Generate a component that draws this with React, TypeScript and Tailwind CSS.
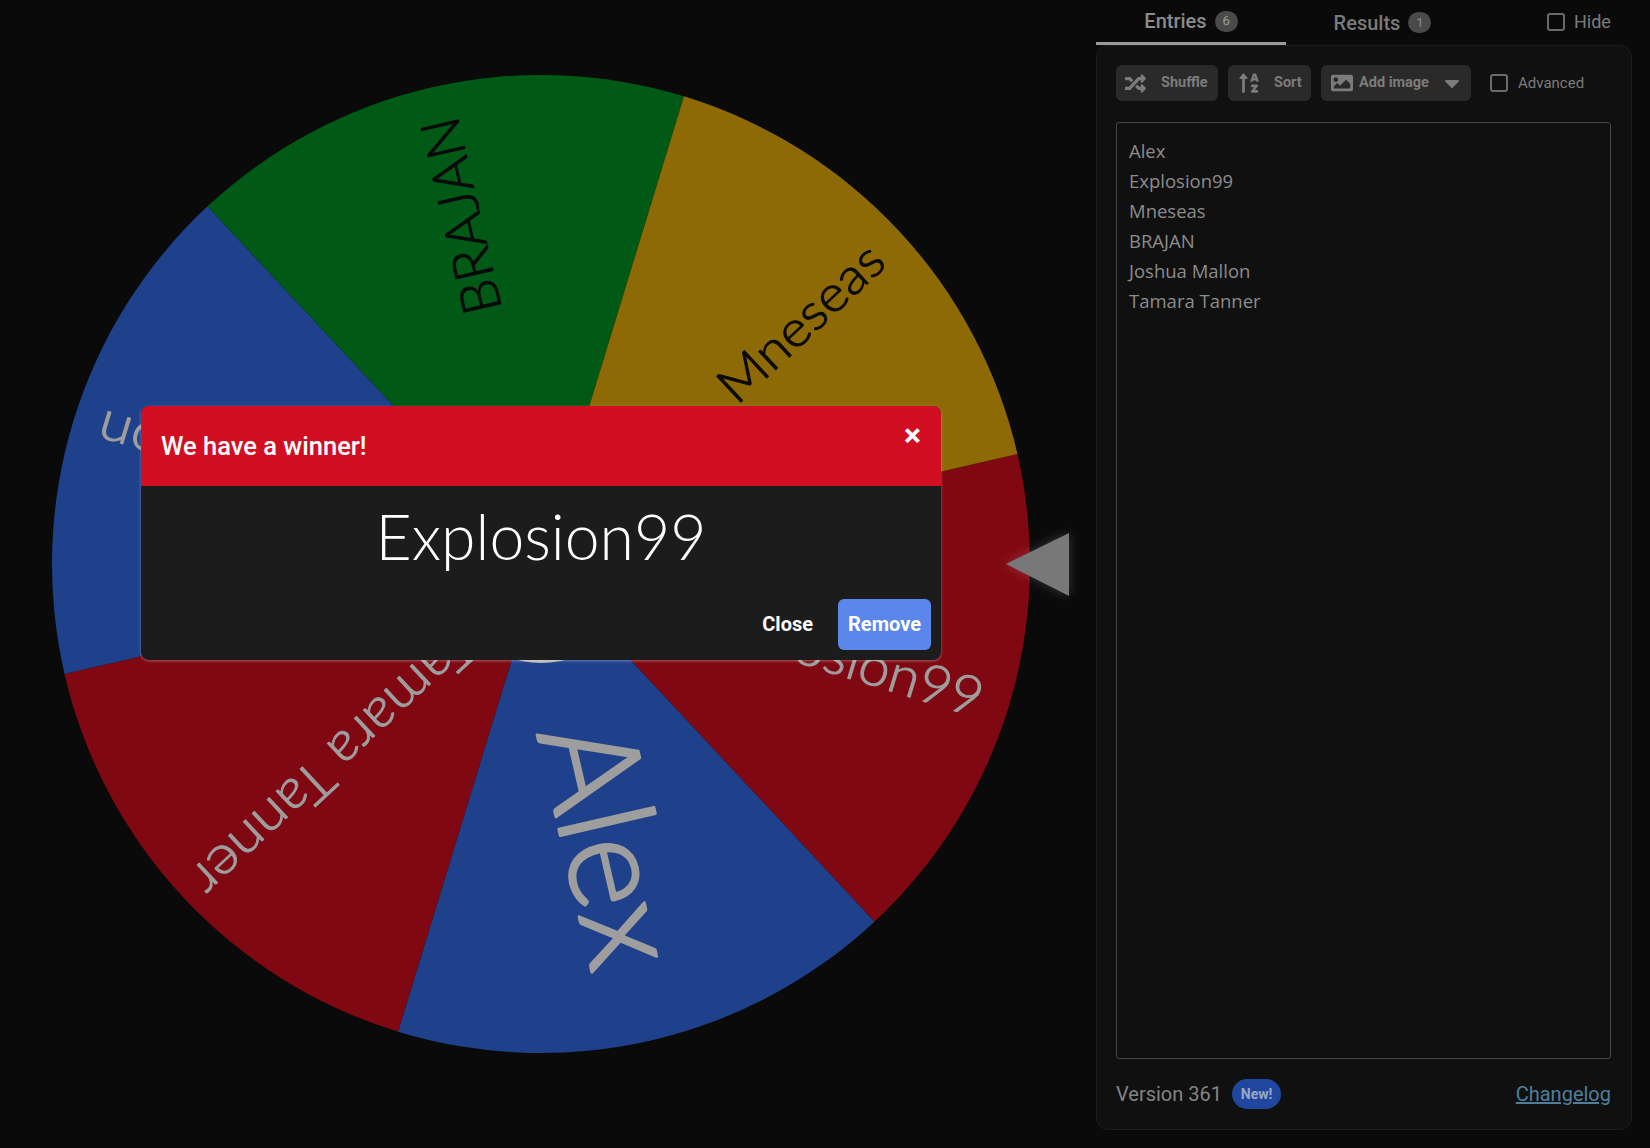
import type { ReactNode } from "react";
import { FaCaretDown, FaImage, FaRandom, FaSortAlphaUp } from "react-icons/fa";

type Slice = {
  name: string;
  from: number;
  color: string;
  text: string;
  size: number;
  end: number;
  length: number;
  stroke: number;
  lift: number;
};

const CX = 541;
const CY = 564;
const R = 489;

const slices: Slice[] = [
  { name: "Explosion99", from: -13, color: "#800812", text: "#9e9e9e", size: 54, end: 461, length: 296, stroke: 1, lift: 0 },
  { name: "Alex", from: 47, color: "#1f408b", text: "#9e9e9e", size: 134, end: 412, length: 248, stroke: 3, lift: 6 },
  { name: "Tamara Tanner", from: 107, color: "#800812", text: "#9e9e9e", size: 54, end: 470, length: 368, stroke: 1, lift: 5 },
  { name: "Joshua Mallon", from: 167, color: "#1f408b", text: "#9e9e9e", size: 54, end: 463, length: 368, stroke: 1, lift: 0 },
  { name: "BRAJAN", from: 227, color: "#005a16", text: "#0a0a0a", size: 54, end: 457, length: 200, stroke: 1, lift: 0 },
  { name: "Mneseas", from: 287, color: "#8d6a05", text: "#0a0a0a", size: 50, end: 458, length: 207, stroke: 1, lift: 0 },
];

const entries = ["Alex", "Explosion99", "Mneseas", "BRAJAN", "Joshua Mallon", "Tamara Tanner"];

function point(angle: number) {
  const a = (angle * Math.PI) / 180;
  return `${CX + R * Math.cos(a)} ${CY + R * Math.sin(a)}`;
}

function Wheel() {
  return (
    <svg width="1096" height="1148" viewBox="0 0 1096 1148" className="block">
      {slices.map((s) => (
        <path key={s.name} d={`M${CX} ${CY}L${point(s.from)}A${R} ${R} 0 0 1 ${point(s.from + 60)}Z`} fill={s.color} />
      ))}
      <circle cx={CX} cy={CY} r={97.5} fill="#9a9a9a" stroke="#b5b5b5" strokeWidth={3} />
      {slices.map((s) => (
        <text
          key={s.name}
          transform={`rotate(${s.from + 30} ${CX} ${CY})`}
          x={CX + s.end}
          y={CY + s.size * 0.36 - s.lift}
          textAnchor="end"
          textLength={s.length}
          lengthAdjust="spacingAndGlyphs"
          fill={s.text}
          stroke={s.text}
          strokeWidth={s.stroke}
          strokeLinejoin="round"
          fontSize={s.size}
          fontWeight={300}
          fontFamily="Lato, 'Open Sans', sans-serif"
        >
          {s.name}
        </text>
      ))}
      <polygon points="1006,564 1069,533 1069,596" fill="#787878" style={{ filter: "drop-shadow(0 0 6px rgba(255,255,255,0.18))" }} />
    </svg>
  );
}

function Check({ label, cls }: { label: string; cls: string }) {
  return (
    <label className={`flex items-center text-[#7c7c7c] ${cls}`}>
      <span className="h-[18px] w-[18px] rounded-[3px] border-2 border-[#6a6a6a]" />
      {label}
    </label>
  );
}

function ToolButton({ label, icon, cls, children }: { label: string; icon: ReactNode; cls: string; children?: ReactNode }) {
  return (
    <button className={`flex h-9 items-center rounded-md bg-[#2a2a2a] text-[14.5px] font-bold text-[#7c7c7c] ${cls}`}>
      {icon}
      {label}
      {children}
    </button>
  );
}

export default function App() {
  return (
    <div className="relative flex h-[1148px] w-[1650px] overflow-hidden bg-[#0a0a0a] font-['Roboto',sans-serif]">
      <div className="w-[1096px] shrink-0 blur-[0.4px]">
        <Wheel />
      </div>

      <div className="flex w-[536px] shrink-0 flex-col">
        <div className="relative flex h-[45px] shrink-0">
          <div className="flex h-[45px] w-[190px] items-center justify-center gap-2 border-b-[3px] border-[#9a9a9a] text-[20px] font-medium text-[#8c8c8c]">
            Entries
            <span className="flex h-[21px] w-[23px] items-center justify-center rounded-full bg-[#4a4a4a] text-[13px] font-normal text-[#9a9a9a]">6</span>
          </div>
          <div className="flex h-[45px] w-[190px] items-center justify-center gap-2 pl-[3px] text-[20px] font-medium text-[#7a7a7a]">
            Results
            <span className="flex h-[21px] w-[23px] items-center justify-center rounded-full bg-[#4a4a4a] text-[13px] font-normal text-[#8a8a8a]">1</span>
          </div>
          <Check label="Hide" cls="ml-[71px] gap-[9px] pb-[2px] text-[18px]" />
        </div>

        <div className="flex h-[1085px] flex-col rounded-xl border border-[#1c1c1c] bg-[#101010] px-[19px]">
          <div className="mt-[19px] flex h-9 shrink-0 items-center gap-[10px]">
            <ToolButton cls="w-[102px] gap-[15px] pl-[9px]" label="Shuffle" icon={<FaRandom size={21} />} />
            <ToolButton cls="w-[83px] gap-[14px] pl-[10px]" label="Sort" icon={<FaSortAlphaUp size={22} />} />
            <ToolButton cls="w-[150px] gap-[6px] pl-[10px]" label="Add image" icon={<FaImage size={22} />}>
              <FaCaretDown size={24} className="ml-[5px]" />
            </ToolButton>
            <Check label="Advanced" cls="ml-[9px] gap-[10px] text-[15px]" />
          </div>

          <div className="mt-[21px] h-[937px] w-[495px] shrink-0 rounded-[3px] border border-[#444444] bg-[#101010] px-3 pt-[13px] font-['Open_Sans',sans-serif] text-[18.5px] leading-[30px] text-[#8c8c8c]">
            {entries.map((e) => (
              <div key={e}>{e}</div>
            ))}
          </div>

          <div className="mt-5 flex h-[30px] items-center text-[20px] text-[#848484]">
            Version 361
            <span className="ml-[10px] flex h-[30px] w-[49px] items-center justify-center rounded-full bg-[#1f47a0] text-[14px] font-bold text-[#9aa8c4]">New!</span>
            <a href="#changelog" className="ml-auto mr-px text-[#4d7f9c] underline">Changelog</a>
          </div>
        </div>
      </div>

      <div className="absolute left-[141px] top-[406px] flex h-[254px] w-[800px] flex-col overflow-hidden rounded-lg bg-[#1c1c1c] shadow-[0_1px_3px_rgba(255,255,255,0.35)]">
        <div className="flex h-20 shrink-0 items-center justify-between bg-[#d20f22] pl-5 pr-5">
          <span className="text-[25.5px] font-medium text-white">We have a winner!</span>
          <span className="mb-[22px] text-[32px] font-bold leading-none text-white">×</span>
        </div>
        <div className="flex h-[100px] items-center justify-center font-['Lato',sans-serif] text-[62.5px] font-light text-white">
          Explosion99
        </div>
        <div className="flex items-center justify-end gap-[25px] pr-[10px] pt-[13px]">
          <span className="pb-[2px] text-[20px] font-bold text-white">Close</span>
          <button className="h-[51px] w-[93px] rounded-md bg-[#5b86ea] pb-[2px] text-[20px] font-bold text-white">Remove</button>
        </div>
      </div>
    </div>
  );
}
